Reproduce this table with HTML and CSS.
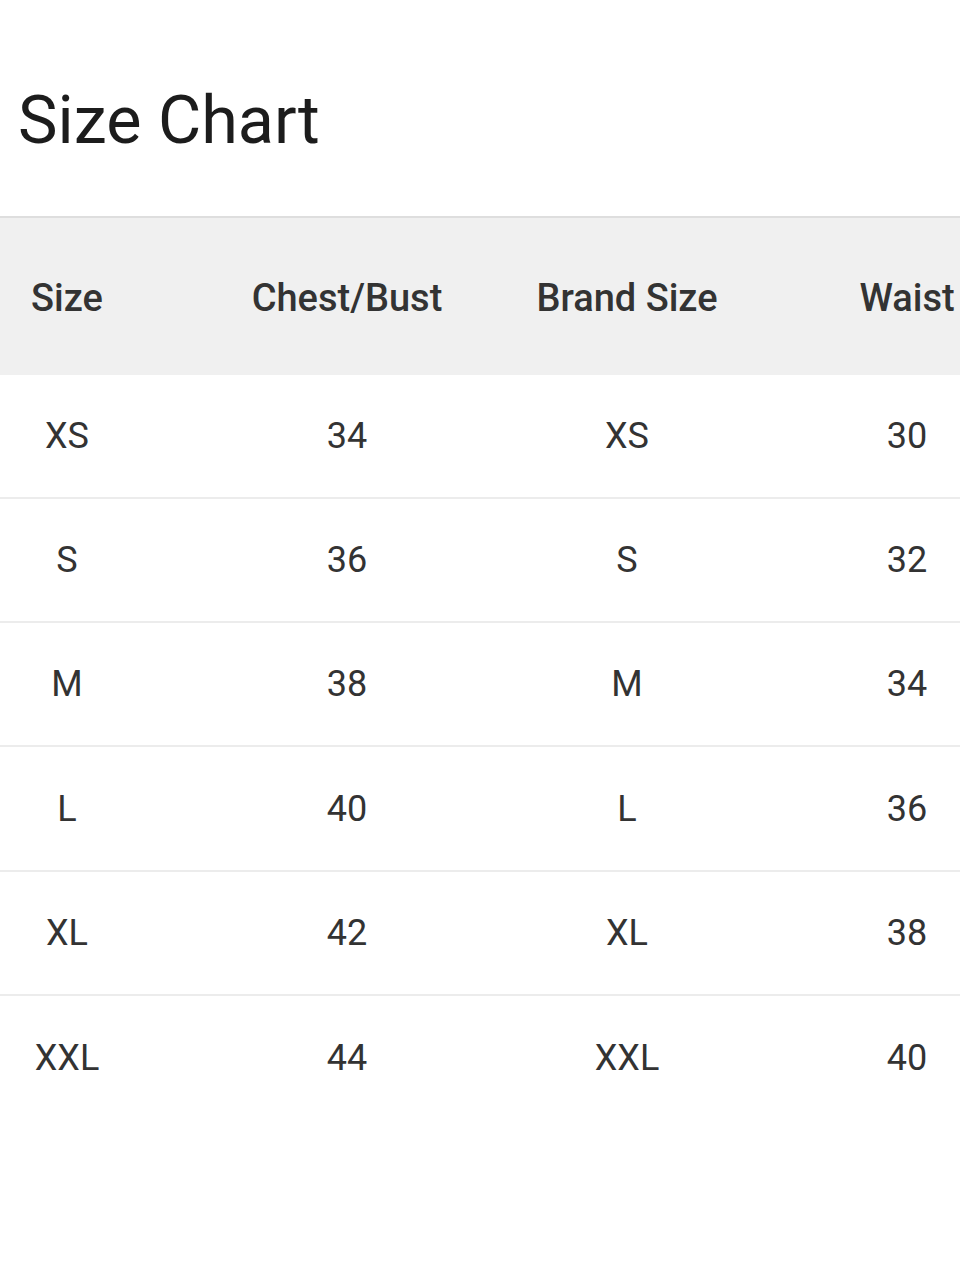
FILE: index.html
```html
<!DOCTYPE html>
<html lang="en">
<head>
<meta charset="utf-8">
<title>Size Chart</title>
<link rel="stylesheet" href="styles.css">
</head>
<body>
<main class="page">
  <h1 class="title">Size Chart</h1>
  <div class="chart">
    <div class="row head">
      <div class="cell">Size</div>
      <div class="cell">Chest/Bust</div>
      <div class="cell">Brand Size</div>
      <div class="cell">Waist</div>
    </div>
    <div class="row">
      <div class="cell">XS</div><div class="cell">34</div><div class="cell">XS</div><div class="cell">30</div>
    </div>
    <div class="row">
      <div class="cell">S</div><div class="cell">36</div><div class="cell">S</div><div class="cell">32</div>
    </div>
    <div class="row">
      <div class="cell">M</div><div class="cell">38</div><div class="cell">M</div><div class="cell">34</div>
    </div>
    <div class="row">
      <div class="cell">L</div><div class="cell">40</div><div class="cell">L</div><div class="cell">36</div>
    </div>
    <div class="row">
      <div class="cell">XL</div><div class="cell">42</div><div class="cell">XL</div><div class="cell">38</div>
    </div>
    <div class="row last">
      <div class="cell">XXL</div><div class="cell">44</div><div class="cell">XXL</div><div class="cell">40</div>
    </div>
  </div>
</main>
</body>
</html>
```

FILE: styles.css
```css
html, body {
  margin: 0;
  padding: 0;
  background: #ffffff;
}
body {
  font-family: Roboto, "Liberation Sans", sans-serif;
  overflow-x: hidden;
}
.page {
  width: 960px;
  overflow: hidden;
}
.title {
  margin: 0;
  padding: 87px 0 0 18px;
  font-size: 66.5px;
  line-height: 67px;
  font-weight: 400;
  color: #1c1c1c;
  letter-spacing: 0;
}
.chart {
  margin-top: 62px;
  width: 1120px;
  margin-left: -73px;
}
.row {
  display: grid;
  grid-template-columns: repeat(4, 280px);
  align-items: center;
  height: 124.3px;
  box-sizing: border-box;
  border-bottom: 2px solid #ececec;
}
.row.last {
  border-bottom: none;
}
.row.head {
  height: 158.5px;
  padding-top: 3px;
  background: #f0f0f0;
  border-top: 2px solid #dedede;
  border-bottom: none;
}
.cell {
  text-align: center;
  font-size: 36px;
  color: #333333;
  white-space: nowrap;
}
.head .cell {
  font-size: 38px;
  font-weight: 500;
  color: #333333;
}
```
